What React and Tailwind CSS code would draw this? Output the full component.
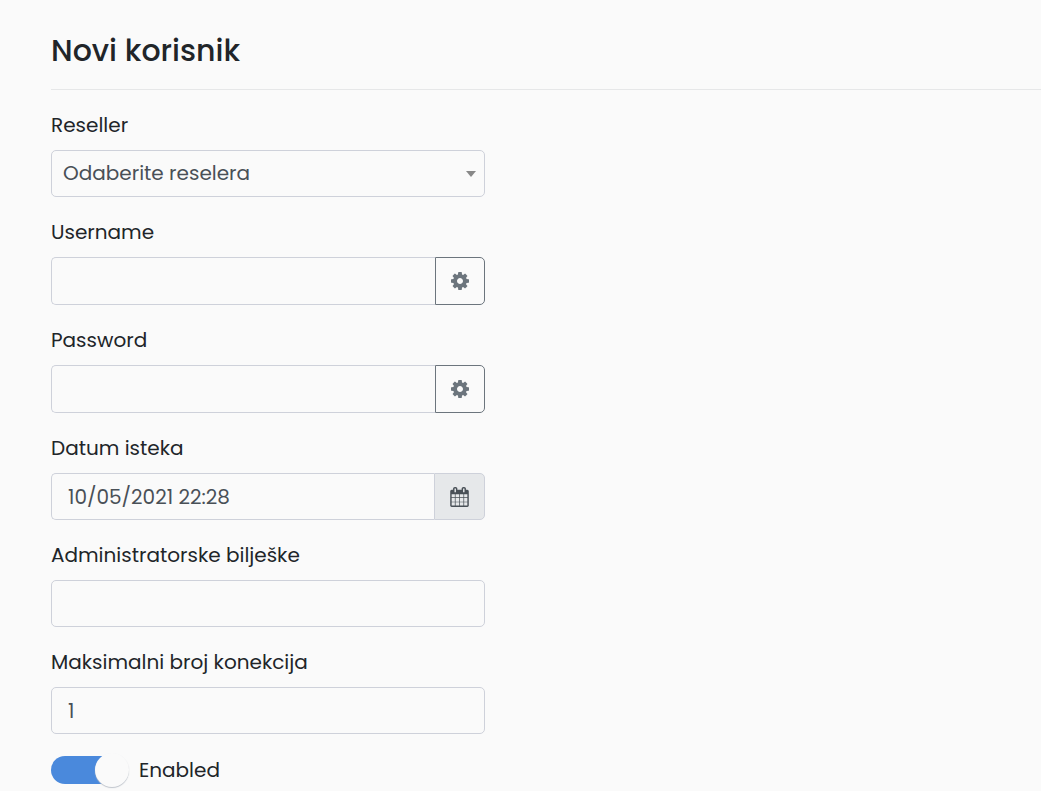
import React, { useState } from "react";

const CONTROL =
  "block w-full min-w-0 border border-[#ced1da] bg-[#fafafa] text-xl text-[#495057] outline-none focus:border-[#4a89dc]";

function GearIcon() {
  return (
    <svg viewBox="0 128 1536 1536" className="size-[18px]" fill="currentColor" aria-hidden="true">
      <path d="M1024 896q0-106-75-181t-181-75-181 75-75 181 75 181 181 75 181-75 75-181zm512-109v222q0 12-8 23t-20 13l-185 28q-19 54-39 91 35 50 107 138 10 12 10 25t-9 23q-27 37-99 108t-94 71q-12 0-26-9l-138-108q-44 23-91 38-16 136-29 186-7 28-36 28h-222q-14 0-24.5-8.5t-11.5-21.5l-28-184q-49-16-90-37l-141 107q-10 9-25 9-14 0-25-11-126-114-165-168-7-10-7-23 0-12 8-23 15-21 51-66.5t54-70.5q-27-50-41-99l-183-27q-13-2-21-12.5t-8-23.5v-222q0-12 8-23t19-13l186-28q14-46 39-92-40-57-107-138-10-12-10-24 0-10 9-23 26-36 98.5-107.5t94.5-71.5q13 0 26 10l138 107q44-23 91-38 16-136 29-186 7-28 36-28h222q14 0 24.5 8.5t11.5 21.5l28 184q49 16 90 37l142-107q9-9 24-9 13 0 25 10 129 119 165 170 7 8 7 22 0 12-8 23-15 21-51 66.5t-54 70.5q26 50 41 98l183 28q13 2 21 12.5t8 23.5z" />
    </svg>
  );
}

function CalendarIcon() {
  return (
    <svg viewBox="64 0 1664 1792" className="h-5 w-[19px]" fill="currentColor" aria-hidden="true">
      <path d="M192 1664h288v-288h-288v288zm352 0h320v-288h-320v288zm-352-352h288v-320h-288v320zm352 0h320v-320h-320v320zm-352-384h288v-288h-288v288zm736 736h320v-288h-320v288zm-384-736h320v-288h-320v288zm768 736h288v-288h-288v288zm-384-352h320v-320h-320v320zm-352-864v-288q0-13-9.5-22.5t-22.5-9.5h-64q-13 0-22.5 9.5t-9.5 22.5v288q0 13 9.5 22.5t22.5 9.5h64q13 0 22.5-9.5t9.5-22.5zm736 864h288v-320h-288v320zm-384-384h320v-288h-320v288zm384 0h288v-288h-288v288zm32-480v-288q0-13-9.5-22.5t-22.5-9.5h-64q-13 0-22.5 9.5t-9.5 22.5v288q0 13 9.5 22.5t22.5 9.5h64q13 0 22.5-9.5t9.5-22.5zm384-64v1280q0 52-38 90t-90 38h-1408q-52 0-90-38t-38-90v-1280q0-52 38-90t90-38h128v-96q0-66 47-113t113-47h64q66 0 113 47t47 113v96h384v-96q0-66 47-113t113-47h64q66 0 113 47t47 113v96h128q52 0 90 38t38 90z" />
    </svg>
  );
}

function Field({ id, label, children }) {
  return (
    <div className="flex flex-col gap-2.5">
      <label htmlFor={id} className="text-xl leading-[30px]">
        {label}
      </label>
      {children}
    </div>
  );
}

function GeneratedField({ id, label, action }) {
  return (
    <Field id={id} label={label}>
      <div className="flex h-12">
        <input id={id} type="text" className={`${CONTROL} rounded-l-[5px] border-r-0 px-4`} />
        <button
          type="button"
          aria-label={action}
          className="flex w-[50px] shrink-0 items-center justify-center rounded-r-[5px] border border-[#6c757d] text-[#6c757d] hover:bg-gray-100"
        >
          <GearIcon />
        </button>
      </div>
    </Field>
  );
}

export default function App() {
  const [enabled, setEnabled] = useState(true);
  return (
    <main className="min-h-screen bg-[#fafafa] pt-[31px] pl-[51px] font-['Poppins','Inter',sans-serif] text-[#212529]">
      <h1 className="text-3xl leading-10 font-medium">Novi korisnik</h1>
      <hr className="mt-[18px] mb-5 border-[#e6e7e8]" />
      <form className="flex w-full max-w-[434px] flex-col gap-5" onSubmit={(e) => e.preventDefault()}>
        <Field id="reseller" label="Reseller">
          <div className="relative">
            <select
              id="reseller"
              defaultValue=""
              className={`${CONTROL} h-[47px] appearance-none rounded-[5px] pr-8 pb-0.5 pl-[11px]`}
            >
              <option value="">Odaberite reselera</option>
            </select>
            <svg
              viewBox="0 0 10 6"
              className="pointer-events-none absolute top-[21px] right-[9px] h-1.5 w-2.5"
              fill="#888888"
              aria-hidden="true"
            >
              <path d="M0 0h10L5 6z" />
            </svg>
          </div>
        </Field>
        <GeneratedField id="username" label="Username" action="Generate username" />
        <GeneratedField id="password" label="Password" action="Generate password" />
        <Field id="expiry" label="Datum isteka">
          <div className="flex h-[47px]">
            <input
              id="expiry"
              type="text"
              defaultValue="10/05/2021 22:28"
              className={`${CONTROL} rounded-l-[5px] border-r-0 px-4`}
            />
            <button
              type="button"
              aria-label="Open calendar"
              className="flex w-[51px] shrink-0 items-center justify-center rounded-r-[5px] border border-[#ced1da] bg-[#e6e8ea] text-[#495057]"
            >
              <CalendarIcon />
            </button>
          </div>
        </Field>
        <Field id="notes" label="Administratorske bilješke">
          <input id="notes" type="text" className={`${CONTROL} h-[47px] rounded-[5px] px-4`} />
        </Field>
        <Field id="connections" label="Maksimalni broj konekcija">
          <input
            id="connections"
            type="text"
            inputMode="numeric"
            defaultValue="1"
            className={`${CONTROL} h-[47px] rounded-[5px] px-4`}
          />
        </Field>
        <label className="flex h-8 cursor-pointer items-center gap-2.5 text-xl">
          <span className="relative flex h-7 w-[78px] items-center">
            <input
              type="checkbox"
              role="switch"
              checked={enabled}
              onChange={(e) => setEnabled(e.target.checked)}
              className="h-7 w-[70px] appearance-none rounded-full bg-gray-300 checked:bg-[#4a89dc]"
            />
            <span
              className={`${enabled ? "left-11" : "left-0"} pointer-events-none absolute top-[-3px] size-[34px] rounded-full bg-[#fafafa] shadow-[0px_1px_1px_#bfc4cc]`}
            />
          </span>
          Enabled
        </label>
      </form>
    </main>
  );
}
